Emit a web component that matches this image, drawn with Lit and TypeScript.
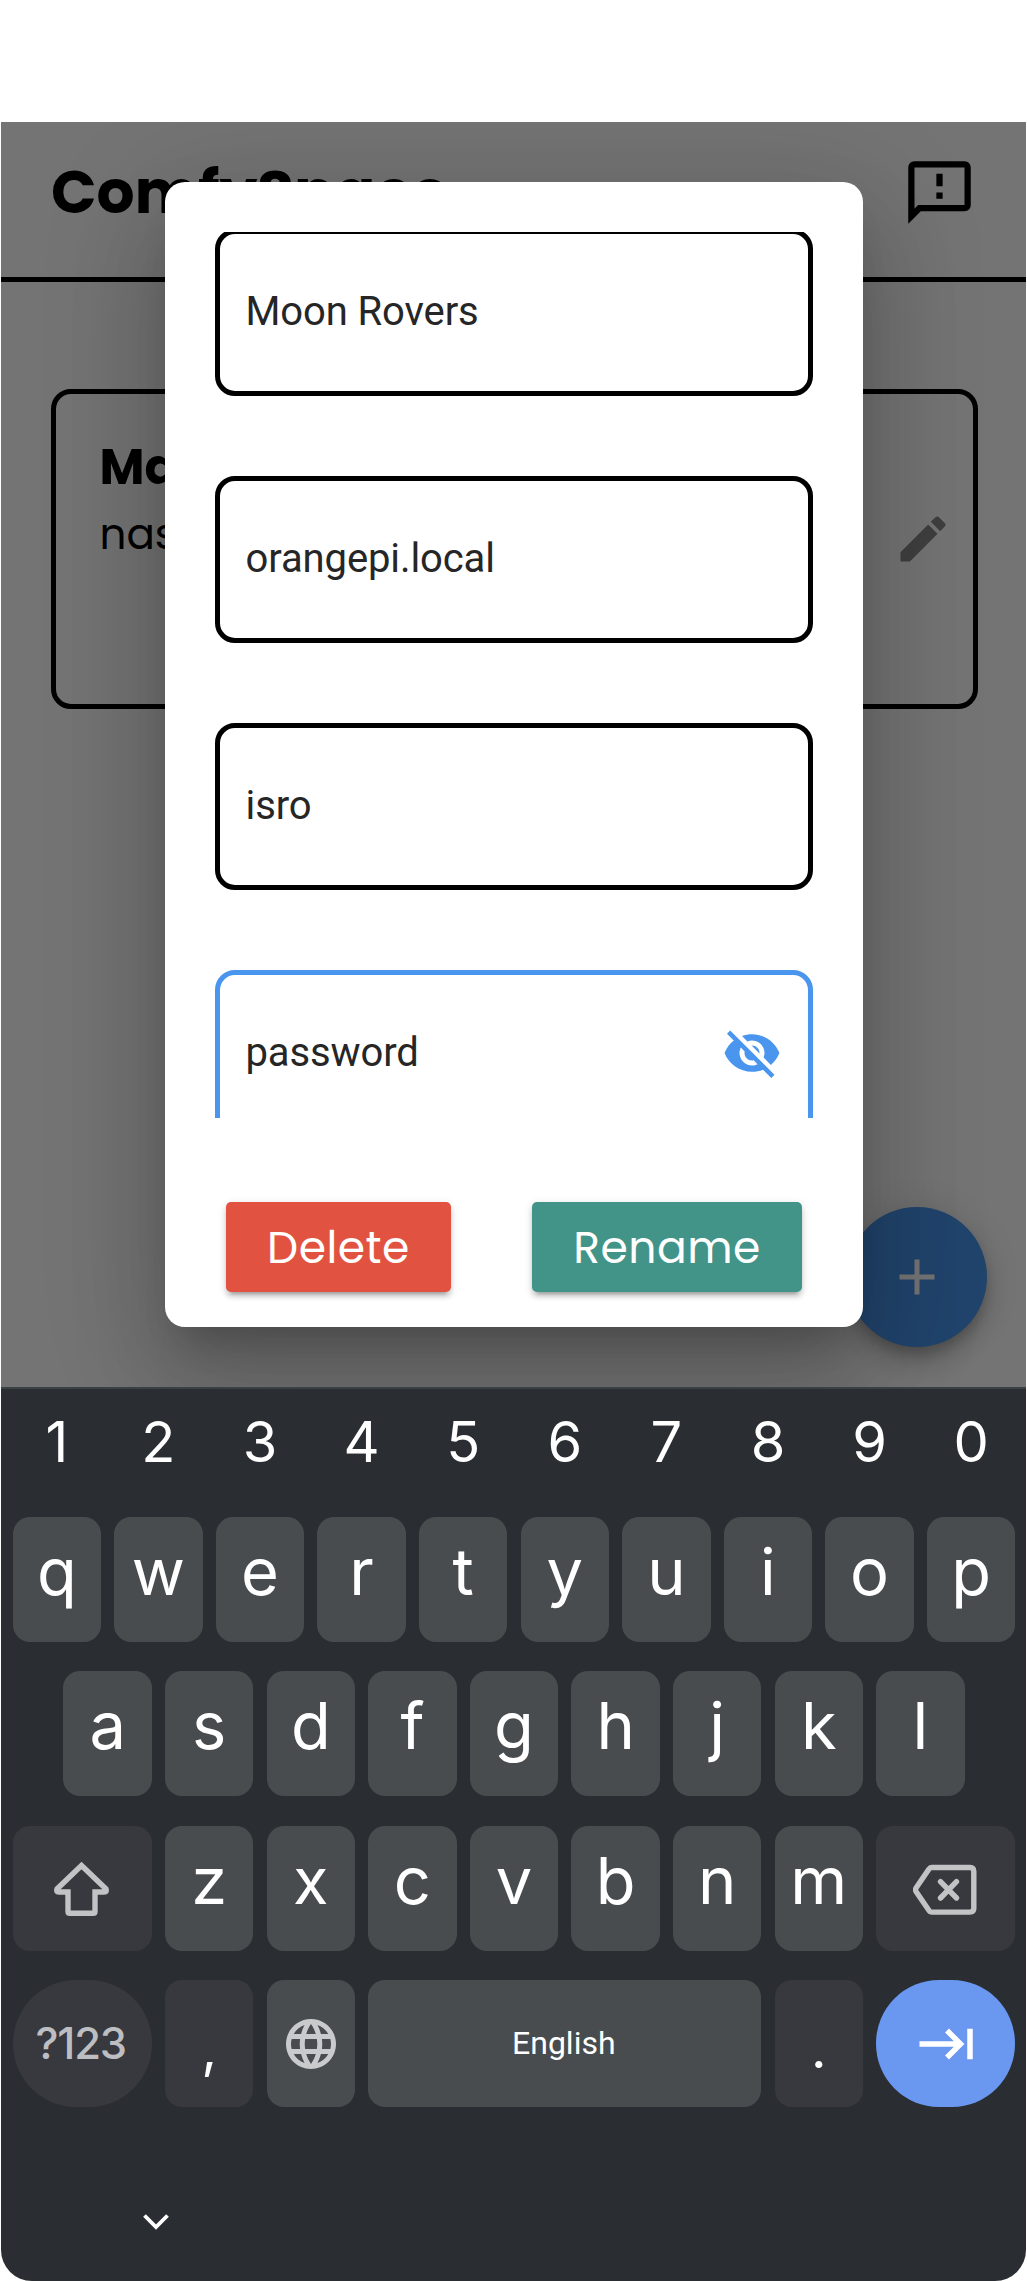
import { LitElement, html, css, svg } from "lit";
import { customElement, property } from "lit/decorators.js";
import { classMap } from "lit/directives/class-map.js";

type Key = {
  label?: string;
  icon?: string;
  span?: number;
  dark?: boolean;
  kind?: string;
};

const letters = (s: string): Key[] => [...s].map((label) => ({ label }));

const ROWS: Key[][] = [
  letters("qwertyuiop"),
  letters("asdfghjkl"),
  [{ icon: "shift", span: 3, dark: true }, ...letters("zxcvbnm"), { icon: "backspace", span: 3, dark: true }],
  [
    { label: "?123", span: 3, dark: true, kind: "symbols" },
    { label: ",", dark: true, kind: "punct" },
    { icon: "globe" },
    { label: "English", span: 8, kind: "space" },
    { label: ".", dark: true, kind: "punct" },
    { icon: "next", span: 3, kind: "enter" },
  ],
];

const ICONS: Record<string, unknown> = {
  shift: svg`<svg width="60" height="60" viewBox="0 0 60 60" fill="none" stroke="#c2c3c5" stroke-width="5.4" stroke-linejoin="round"><path d="M29.500 7.500 L54 31 Q55.500 34 52 34 H43 V53.500 Q43 55.300 41.200 55.300 H17.800 Q16 55.300 16 53.500 V34 H7 Q3.500 34 5 31 Z" stroke-linejoin="miter"/></svg>`,
  backspace: svg`<svg width="66" height="56" viewBox="0 0 66 56" fill="none" stroke="#c2c3c5" stroke-width="5.4" stroke-linejoin="round" stroke-linecap="round"><path d="M18.500 7.500 H57 Q60.800 7.500 60.800 11.300 V48.300 Q60.800 52.100 57 52.100 H18.500 Q17 52.100 16 50.500 L3 31.500 Q2 29.800 3 28.100 L16 9.100 Q17 7.500 18.500 7.500 Z"/><path d="M27.500 21.600 L43.500 38 M43.500 21.600 L27.500 38"/></svg>`,
  globe: svg`<svg width="60" height="60" viewBox="0 0 24 24" fill="#c9cacc"><path d="M11.99 2C6.470 2 2 6.480 2 12s4.470 10 9.990 10C17.520 22 22 17.520 22 12S17.520 2 11.990 2zm6.930 6h-2.950c-.32-1.250-.78-2.450-1.380-3.560 1.840.63 3.370 1.910 4.330 3.560zM12 4.040c.83 1.200 1.480 2.530 1.910 3.960h-3.820c.43-1.430 1.080-2.760 1.910-3.960zM4.260 14C4.100 13.360 4 12.690 4 12s.1-1.360.26-2h3.380c-.08.66-.14 1.320-.14 2 0 .68.06 1.340.14 2H4.260zm.82 2h2.950c.32 1.250.78 2.450 1.380 3.560-1.840-.63-3.370-1.900-4.330-3.560zm2.950-8H5.080c.96-1.660 2.490-2.930 4.330-3.560C8.810 5.550 8.350 6.750 8.030 8zM12 19.960c-.83-1.200-1.480-2.530-1.910-3.960h3.820c-.43 1.430-1.080 2.760-1.910 3.960zM14.340 14H9.660c-.09-.66-.16-1.320-.16-2 0-.68.07-1.350.16-2h4.680c.09.650.16 1.320.16 2 0 .68-.07 1.340-.16 2zm.25 5.560c.6-1.110 1.060-2.310 1.380-3.560h2.950c-.96 1.650-2.490 2.930-4.330 3.560zM16.360 14c.08-.66.14-1.320.14-2 0-.68-.06-1.340-.14-2h3.380c.16.640.26 1.310.26 2s-.1 1.360-.26 2h-3.380z"/></svg>`,
  next: svg`<svg width="60" height="40" viewBox="0 0 60 40" fill="none" stroke="#fff" stroke-width="5.500"><path d="M3.500 20 H46 M31 6.500 L44.500 20 L31 33.500 M54 4.800 V35.200"/></svg>`,
};

@customElement("soft-keyboard")
export class SoftKeyboard extends LitElement {
  static styles = css`
    :host {
      display: block;
      box-sizing: border-box;
      width: 1025px;
      height: 894px;
      padding: 0 4px 0 5px;
      border-radius: 0 0 31px 31px;
      border-top: 2px solid #3b4045;
      background: #2a2d32;
      color: #fff;
      font-family: "Google Sans", "Product Sans", Inter, Roboto, sans-serif;
    }
    .digits {
      display: grid;
      grid-template-columns: repeat(10, 1fr);
      height: 128px;
      font-size: 56px;
      line-height: 106px;
      text-align: center;
    }
    .rows {
      display: flex;
      flex-direction: column;
      gap: 29.6px;
    }
    .row {
      display: flex;
      justify-content: center;
    }
    .slot {
      box-sizing: border-box;
      flex: 0 0 10%;
      padding: 0 6.6px;
    }
    .slot.s3 { flex-basis: 15%; }
    .slot.s8 { flex-basis: 40%; }
    .key {
      display: flex;
      align-items: center;
      justify-content: center;
      height: 125px;
      border-radius: 17px;
      background: #484c4f;
      font-size: 65px;
      line-height: 109px;
    }
    .row:last-child .key { height: 126.500px; }
    .glyph { height: 125px; }
    .dark { background: #37393e; }
    .symbols {
      border-radius: 63px;
      color: #bdbec1;
      font-size: 43.500px;
      font-weight: 500;
      letter-spacing: -1.200px;
      padding-right: 3px;
    }
    .symbols .glyph, .space .glyph { line-height: 125px; }
    .punct .glyph { line-height: 135px; }
    .punct { font-size: 54px; }
    .space { font-size: 32px; font-family: Roboto, sans-serif; padding-right: 2px; }
    .enter { border-radius: 63px; background: #6a97f0; }
    svg { display: block; }
    .hide { display: block; margin: 99px 0 0 135px; }
  `;

  render() {
    return html`
      <div class="digits">${[..."1234567890"].map((d) => html`<span>${d}</span>`)}</div>
      <div class="rows">
        ${ROWS.map(
          (row) => html`<div class="row">
            ${row.map(
              (k) => html`<div class=${classMap({ slot: true, s3: k.span === 3, s8: k.span === 8 })}>
                <div class=${classMap({ key: true, dark: !!k.dark, [k.kind ?? "plain"]: true })}>
                  ${k.icon ? ICONS[k.icon] : html`<span class="glyph">${k.label}</span>`}
                </div>
              </div>`
            )}
          </div>`
        )}
      </div>
      <svg class="hide" width="30" height="30" viewBox="0 0 30 30" fill="none" stroke="#fff" stroke-width="3.800">
        <path d="M3.500 9.500 L15 21 L26.500 9.500" />
      </svg>
    `;
  }
}

@customElement("text-box")
export class TextBox extends LitElement {
  @property() value = "";
  @property({ type: Boolean, reflect: true }) active = false;

  static styles = css`
    :host {
      display: flex;
      flex: none;
      box-sizing: border-box;
      align-items: center;
      justify-content: space-between;
      height: 167px;
      padding: 0 26px 0 25.500px;
      border: 5px solid #000;
      border-radius: 20px;
      color: #262626;
      font: 40px/48px Roboto, sans-serif;
      letter-spacing: -0.100px;
    }
    :host([active]) { border-color: #4a95ee; }
    svg { display: block; }
  `;

  render() {
    return html`<span>${this.value}</span>${this.active
        ? html`<svg width="60" height="60" viewBox="0 0 24 24" fill="#4a95ee"><path d="M12 7c2.760 0 5 2.240 5 5 0 .65-.13 1.260-.36 1.830l2.920 2.920c1.510-1.260 2.700-2.890 3.430-4.750-1.730-4.390-6-7.500-11-7.500-1.400 0-2.740.25-3.980.7l2.160 2.160C10.740 7.130 11.350 7 12 7zM2 4.270l2.280 2.280.46.46C3.080 8.300 1.780 10.020 1 12c1.730 4.390 6 7.500 11 7.500 1.550 0 3.030-.3 4.380-.84l.42.42L19.730 22 21 20.730 3.270 3 2 4.270zM7.530 9.800l1.550 1.550c-.05.21-.08.43-.08.650 0 1.660 1.340 3 3 3 .22 0 .44-.03.65-.08l1.550 1.550c-.67.33-1.410.53-2.200.53-2.760 0-5-2.240-5-5 0-.79.2-1.530.53-2.200zm4.310-.78l3.150 3.150.02-.16c0-1.660-1.340-3-3-3l-.17.010z"/></svg>`
        : ""}`;
  }
}

@customElement("app-root")
export class AppRoot extends LitElement {
  static styles = css`
    :host {
      display: block;
      box-sizing: border-box;
      width: 1027px;
      height: 2281px;
      padding: 122px 1px 0;
      background: #fff;
      overflow: hidden;
    }
    .screen {
      position: relative;
      height: 1264.5px;
      overflow: hidden;
      background: #fff;
      font-family: Poppins, Inter, sans-serif;
      font-feature-settings: "cv11";
    }
    .header {
      display: flex;
      box-sizing: border-box;
      align-items: center;
      justify-content: space-between;
      height: 160px;
      padding: 0 49px 15px 50px;
      border-bottom: 5px solid #000;
    }
    .brand { font-size: 59.800px; line-height: 70px; font-weight: 700; }
    .card {
      display: flex;
      box-sizing: border-box;
      justify-content: space-between;
      align-items: center;
      width: 927px;
      height: 319.500px;
      margin: 107px 0 0 50px;
      padding: 0 20px 20px 43.500px;
      border: 5px solid #000;
      border-radius: 20px;
    }
    .info { align-self: flex-start; padding-top: 38px; }
    .name { font-size: 49px; line-height: 70px; font-weight: 700; }
    .host { font-size: 42px; line-height: 65px; }
    .fab {
      position: absolute;
      left: 846px;
      top: 1085px;
      display: flex;
      align-items: center;
      justify-content: center;
      width: 140px;
      height: 140px;
      border-radius: 50%;
      background: #4a95ee;
      box-shadow: 0 8px 13px -2px rgba(0, 0, 0, 0.2), 0 15px 25px rgba(0, 0, 0, 0.14), 0 3px 45px rgba(0, 0, 0, 0.12);
    }
    .scrim { position: absolute; inset: 0; background: rgba(0, 0, 0, 0.545); }
    .dialog {
      position: absolute;
      left: 164px;
      top: 60px;
      display: flex;
      flex-direction: column;
      box-sizing: border-box;
      width: 698px;
      height: 1145px;
      padding: 50px 50px 0;
      border-radius: 20px;
      background: #fff;
      box-shadow: 0 27px 37px -17px rgba(0, 0, 0, 0.2), 0 60px 95px 7px rgba(0, 0, 0, 0.14), 0 22px 115px 20px rgba(0, 0, 0, 0.12);
    }
    .fields {
      display: flex;
      flex-direction: column;
      gap: 80px;
      height: 886px;
      overflow: hidden;
    }
    .fields text-box:first-child { margin-top: -3.500px; }
    .actions {
      display: flex;
      justify-content: space-between;
      padding: 84px 11px 0;
    }
    .btn {
      height: 90px;
      border-radius: 5px;
      color: #fff;
      font-size: 44px;
      line-height: 92px;
      letter-spacing: 0.500px;
      text-align: center;
      box-shadow: 0 7px 3px -5px rgba(0, 0, 0, 0.2), 0 5px 5px rgba(0, 0, 0, 0.14), 0 2px 10px rgba(0, 0, 0, 0.12);
    }
    .delete { width: 225px; background: #e25241; }
    .rename { width: 270px; background: #429488; }
    svg { display: block; }
  `;

  render() {
    return html`
      <div class="screen">
        <div class="header">
          <span class="brand">ComfySpace</span>
          <svg width="75" height="75" viewBox="0 0 24 24"><path d="M20 2H4c-1.100 0-1.990.9-1.990 2L2 22l4-4h14c1.100 0 2-.9 2-2V4c0-1.100-.9-2-2-2zm0 14H5.170l-.59.590-.58.580V4h16v12zm-9-4h2v2h-2zm0-6h2v4h-2z" /></svg>
        </div>
        <div class="card">
          <div class="info">
            <div class="name">Mars</div>
            <div class="host">nasa</div>
          </div>
          <svg width="60" height="60" viewBox="0 0 24 24" fill="#8a8a8a"><path d="M3 17.250V21h3.750L17.810 9.940l-3.750-3.750L3 17.250zM20.710 7.040c.39-.39.39-1.020 0-1.410l-2.340-2.340c-.39-.39-1.020-.39-1.410 0l-1.830 1.830 3.750 3.750 1.830-1.830z" /></svg>
        </div>
        <div class="fab">
          <svg width="60" height="60" viewBox="0 0 24 24" fill="#fff"><path d="M19 13h-6v6h-2v-6H5v-2h6V5h2v6h6v2z" /></svg>
        </div>
        <div class="scrim"></div>
        <div class="dialog">
          <div class="fields">
            <text-box value="Moon Rovers"></text-box>
            <text-box value="orangepi.local"></text-box>
            <text-box value="isro"></text-box>
            <text-box value="password" active></text-box>
          </div>
          <div class="actions">
            <div class="btn delete">Delete</div>
            <div class="btn rename">Rename</div>
          </div>
        </div>
      </div>
      <soft-keyboard></soft-keyboard>
    `;
  }
}
